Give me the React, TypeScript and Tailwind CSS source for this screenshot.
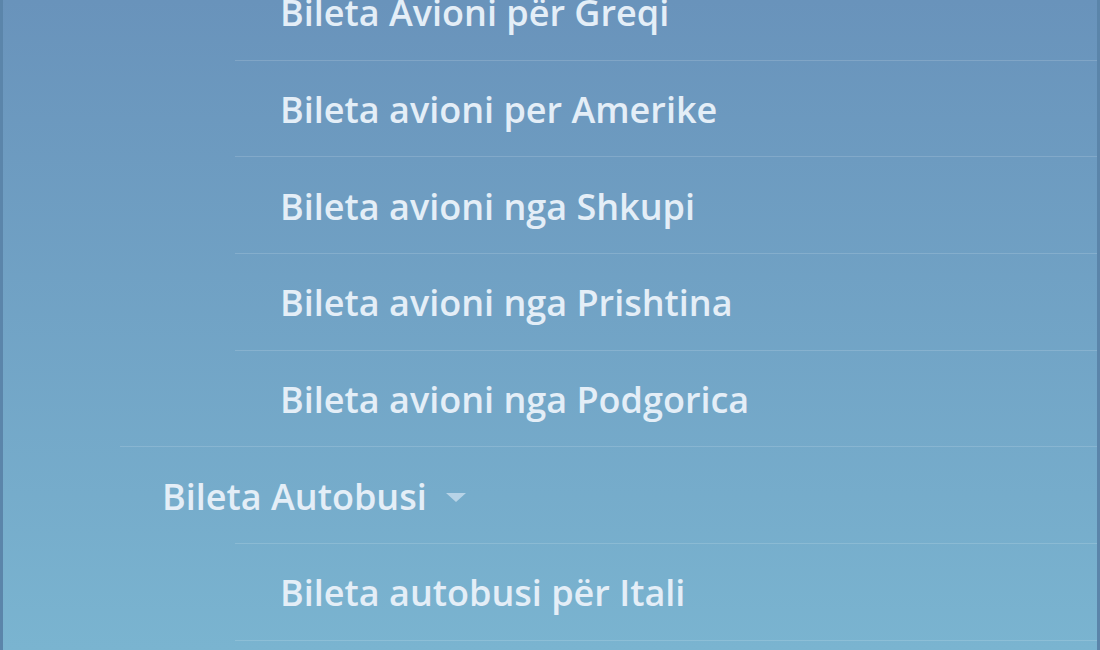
const avioniLinks = [
  "Bileta Avioni për Greqi",
  "Bileta avioni per Amerike",
  "Bileta avioni nga Shkupi",
  "Bileta avioni nga Prishtina",
  "Bileta avioni nga Podgorica",
];

const autobusiLinks = ["Bileta autobusi për Itali", "Bileta autobusi për Gjermani"];

function SubItem({ label, first }: { label: string; first?: boolean }) {
  return (
    <li className={first ? "" : "border-t border-white/15"}>
      <a href="#" className="flex h-[95.7px] items-center pl-[45px] pt-[3px] text-[#e4eef7]">
        {label}
      </a>
    </li>
  );
}

export default function App() {
  return (
    <div className="h-[650px] w-[1100px] overflow-hidden border-x-[3px] border-[#5b85aa] bg-gradient-to-b from-[#6993bb] to-[#7ab4d0] font-['Open_Sans',sans-serif] text-[36px] font-semibold">
      <ul className="-mt-[36px] pl-[117px]">
        <li>
          <ul className="pl-[115px]">
            {avioniLinks.map((l, i) => (
              <SubItem key={l} label={l} first={i === 0} />
            ))}
          </ul>
        </li>
        <li className="border-t border-white/15">
          <a href="#" className="flex h-[95.7px] items-center gap-[19px] pl-[42px] pt-[3px] text-[#e4eef7]">
            Bileta Autobusi
            <svg width="20" height="10" viewBox="0 0 20 10" className="mt-[2px]">
              <path d="M0 0 L20 0 L10 9 Z" fill="#c8dded" fillOpacity="0.8" />
            </svg>
          </a>
          <ul className="pl-[115px]">
            {autobusiLinks.map((l) => (
              <SubItem key={l} label={l} />
            ))}
          </ul>
        </li>
      </ul>
    </div>
  );
}
